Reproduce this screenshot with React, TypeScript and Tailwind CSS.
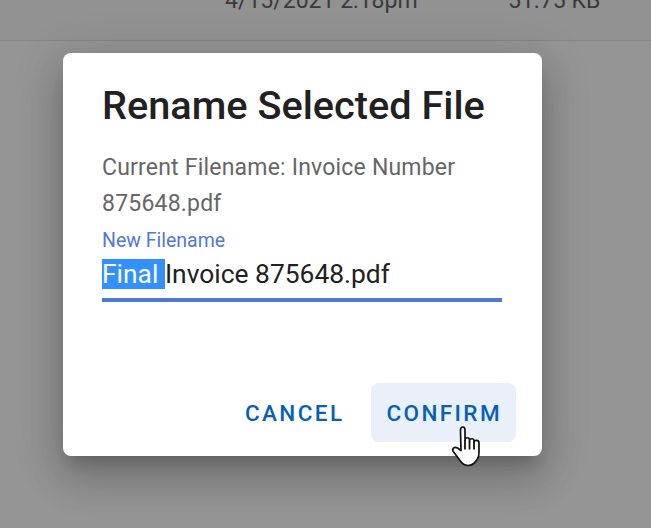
export default function App() {
  return (
    <div className="relative h-[528px] w-[651px] overflow-hidden bg-[#959595] font-['Roboto',sans-serif]">
      {/* File row behind the dialog */}
      <div className="flex h-[41px] items-start border-b border-[#868686] bg-[#929292] text-[23px] leading-[26px] text-[#3a3a3a]">
        <span className="ml-[225px] mt-[-12px] w-[250px]">4/15/2021 2:18pm</span>
        <span className="ml-[33px] mt-[-12px]">51.75 KB</span>
      </div>

      {/* Dialog */}
      <div className="absolute left-[63px] top-[53px] flex h-[403px] w-[479px] flex-col rounded-[8px] bg-white shadow-[0_11px_15px_-7px_rgba(0,0,0,0.2),0_24px_38px_3px_rgba(0,0,0,0.14),0_9px_46px_8px_rgba(0,0,0,0.12)]">
        <div className="pl-[39px] pr-[40px] pt-[31px]">
          <h2 className="text-[39.7px] font-medium leading-[44px] text-[#212121]">Rename Selected File</h2>
          <p className="mt-[22px] text-[23px] leading-[36px] tracking-[0.2px] text-[#666666]">
            Current Filename: Invoice Number 875648.pdf
          </p>
          <div className="mt-[9px] text-[19.5px] leading-[20px] text-[#5079d3]">New Filename</div>
          <div className="mt-[8px] h-[43px] w-[400px] border-b-[4px] border-[#5079d3] text-[26.4px] leading-[31px] text-[#212121]">
            <span className="bg-[#3390ff] text-white">Final </span>Invoice 875648.pdf
          </div>
        </div>
        <div className="mt-auto flex items-center justify-end gap-[14px] pb-[14px] pr-[26px]">
          <button className="h-[59px] pl-[16px] pr-[13px] pt-[3px] text-[22.5px] font-medium tracking-[2.4px] text-[#0561b8]">CANCEL</button>
          <button className="h-[59px] rounded-[8px] bg-[#e9f0f9] pl-[15px] pr-[14px] pt-[3px] text-[22.5px] font-medium tracking-[2.4px] text-[#0561b8]">CONFIRM</button>
        </div>
      </div>

      {/* Mouse pointer */}
      <svg className="absolute left-[445px] top-[420px]" width="45" height="50" viewBox="0 0 45 50">
        <path
          d="M15.500 10c0-4 4.500-4 4.500 0v10c0-3 4.500-3 4.500 0v1c0-3 4.500-3 4.500 0v1.500c0-3 5-3 5 .5V32c0 4-1 7-3 9-2 3-5 4.500-8 4.500-4 0-6-2-8-5l-6-8c-3-3 0-6.500 3.500-4.500l3.500 2.500z"
          fill="#fff"
          stroke="#111"
          strokeWidth="1.700"
          strokeLinejoin="round"
        />
        <path d="M20 20v9.500M24.500 21v8.500M29 22.500v7" stroke="#111" strokeWidth="1.800" fill="none" />
      </svg>
    </div>
  );
}
